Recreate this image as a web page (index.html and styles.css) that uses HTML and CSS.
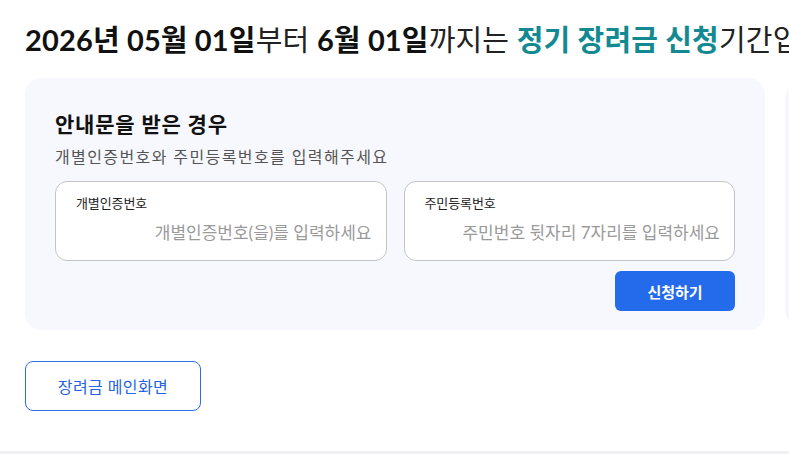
FILE: index.html
```html
<!DOCTYPE html>
<html lang="ko">
<head>
<meta charset="utf-8">
<title>장려금 신청</title>
<link rel="stylesheet" href="styles.css">
</head>
<body>
<main class="page">
  <h1 class="headline"><b>2026년 05월 01일</b>부터 <b>6월 01일</b>까지는 <b class="accent">정기 장려금 신청</b>기간입니다</h1>
  <div class="cards">
    <section class="card">
      <h2 class="card-title">안내문을 받은 경우</h2>
      <p class="card-desc">개별인증번호와 주민등록번호를 입력해주세요</p>
      <div class="fields">
        <label class="field">
          <span class="field-label">개별인증번호</span>
          <input class="field-input" type="text" placeholder="개별인증번호(을)를 입력하세요">
        </label>
        <label class="field">
          <span class="field-label">주민등록번호</span>
          <input class="field-input" type="text" placeholder="주민번호 뒷자리 7자리를 입력하세요">
        </label>
      </div>
      <div class="actions">
        <button class="btn-primary" type="button">신청하기</button>
      </div>
    </section>
    <section class="card card-next"></section>
  </div>
  <div class="bottom">
    <button class="btn-outline" type="button">장려금 메인화면</button>
  </div>
</main>
<div class="footer-strip"></div>
</body>
</html>
```

FILE: styles.css
```css
html, body {
  margin: 0;
  padding: 0;
  background: #ffffff;
  overflow: hidden;
}
body {
  width: 789px;
  height: 454px;
  font-family: Lato, "Noto Sans CJK KR", sans-serif;
  color: #111;
}
.page {
  height: 451px;
  padding: 0 0 0 25px;
  box-sizing: border-box;
  overflow: hidden;
}
.headline {
  margin: 0;
  padding-top: 20px;
  height: 58px;
  box-sizing: border-box;
  font-size: 29px;
  line-height: 40px;
  font-weight: 400;
  color: #222;
  white-space: nowrap;
  letter-spacing: 0.15px;
}
.headline b {
  font-weight: 700;
  color: #111;
}
.headline .accent {
  color: #138a92;
}
.cards {
  display: flex;
  gap: 20px;
  margin-top: 20px;
  align-items: center;
}
.card {
  flex: 0 0 740px;
  width: 740px;
  height: 252px;
  box-sizing: border-box;
  background: #f7f8fd;
  border-radius: 16px;
  padding: 31px 30px 0 30px;
}
.card-next {
  height: 244px;
}
.card-title {
  margin: 0;
  font-size: 21px;
  line-height: 30px;
  font-weight: 700;
  color: #111;
  letter-spacing: 0.8px;
}
.card-desc {
  margin: 7px 0 0;
  font-size: 16px;
  line-height: 22px;
  color: #555;
  letter-spacing: 1.4px;
}
.fields {
  display: flex;
  gap: 17px;
  margin-top: 13px;
}
.field {
  flex: 1;
  height: 80px;
  box-sizing: border-box;
  background: #fff;
  border: 1px solid #c4c4c8;
  border-radius: 12px;
  padding: 12px 14px 0 20px;
  display: flex;
  flex-direction: column;
}
.field-label {
  font-size: 13px;
  line-height: 18px;
  color: #222;
  letter-spacing: -0.1px;
}
.field-input {
  margin-top: 9px;
  border: none;
  outline: none;
  background: transparent;
  padding: 0;
  font-family: inherit;
  font-size: 17px;
  line-height: 24px;
  text-align: right;
  color: #333;
  width: 100%;
}
.field-input::placeholder {
  color: #9a9a9a;
}
.actions {
  display: flex;
  justify-content: flex-end;
  margin-top: 10px;
}
.btn-primary {
  width: 120px;
  height: 40px;
  border: none;
  border-radius: 6px;
  background: #246beb;
  color: #fff;
  font-family: inherit;
  font-size: 15px;
  font-weight: 700;
}
.bottom {
  margin-top: 31px;
}
.btn-outline {
  width: 176px;
  height: 50px;
  background: #fff;
  border: 1px solid #2b6fe6;
  border-radius: 8px;
  color: #2563e0;
  font-family: inherit;
  font-size: 16px;
  letter-spacing: 0.4px;
}
.footer-strip {
  height: 3px;
  background: #eff0f5;
}
```
